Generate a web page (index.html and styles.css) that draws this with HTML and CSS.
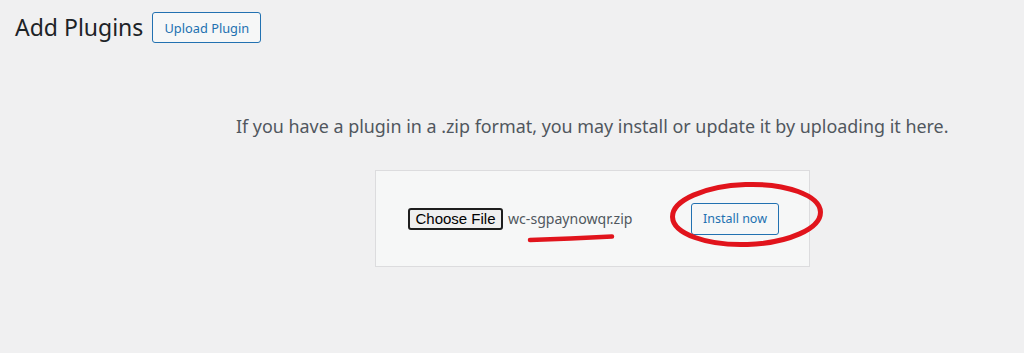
FILE: index.html
```html
<!DOCTYPE html>
<html>
<head>
<meta charset="utf-8">
<link rel="stylesheet" href="styles.css">
</head>
<body>
<div class="page">
  <div class="header">
    <h1 class="title">Add Plugins</h1>
    <button class="btn btn-upload">Upload Plugin</button>
  </div>
  <p class="help">If you have a plugin in a .zip format, you may install or update it by uploading it here.</p>
  <div class="upload-box">
    <span class="file-btn">Choose File</span>
    <span class="file-name">wc-sgpaynowqr.zip</span>
    <button class="btn btn-install">Install now</button>
  </div>
  <svg class="marks" width="1024" height="353" viewBox="0 0 1024 353">
    <path d="M530 240 Q570 238.5 612 236.5" fill="none" stroke="#e1141c" stroke-width="4.5" stroke-linecap="round"/>
    <ellipse cx="746.5" cy="214.5" rx="74" ry="30" fill="none" stroke="#e1141c" stroke-width="5" transform="rotate(-2 746.5 214.5)"/>
  </svg>
</div>
</body>
</html>
```

FILE: styles.css
```css
html, body {
  margin: 0;
  padding: 0;
  background: #f0f0f1;
}
.page {
  position: relative;
  width: 1024px;
  height: 353px;
  overflow: hidden;
  font-family: "Noto Sans", "Open Sans", sans-serif;
}
.header {
  display: flex;
  align-items: center;
  padding: 12px 0 0 15px;
  gap: 9px;
}
.title {
  margin: 0;
  font-size: 23px;
  font-weight: 400;
  color: #1d2327;
  line-height: 31px;
}
.btn {
  font-family: "Noto Sans", "Open Sans", sans-serif;
  background: #f6f7f7;
  color: #2271b1;
  border: 1px solid #2271b1;
  border-radius: 3px;
  cursor: pointer;
}
.btn-upload {
  width: 109px;
  height: 31px;
  font-size: 12.8px;
  padding: 0;
}
.help {
  margin: 70px 0 0 236px;
  font-size: 17.9px;
  line-height: 26px;
  color: #50575e;
}
.upload-box {
  box-sizing: border-box;
  margin: 31px 0 0 375px;
  width: 435px;
  height: 97px;
  background: #f6f7f7;
  border: 1px solid #dcdcde;
  display: flex;
  align-items: center;
  padding-left: 32px;
}
.file-btn {
  box-sizing: border-box;
  display: inline-flex;
  align-items: center;
  justify-content: center;
  width: 95px;
  height: 22px;
  font-family: "Liberation Sans", Arial, sans-serif;
  font-size: 15px;
  color: #000;
  background: #efefef;
  border: 2px solid #1e1e1e;
  border-radius: 3px;
}
.file-name {
  margin-left: 5px;
  font-size: 14.1px;
  color: #50575e;
}
.btn-install {
  margin-left: auto;
  margin-right: 30px;
  width: 88px;
  height: 32px;
  font-size: 12.5px;
  padding: 0;
}
.marks {
  position: absolute;
  left: 0;
  top: 0;
  pointer-events: none;
}
```
